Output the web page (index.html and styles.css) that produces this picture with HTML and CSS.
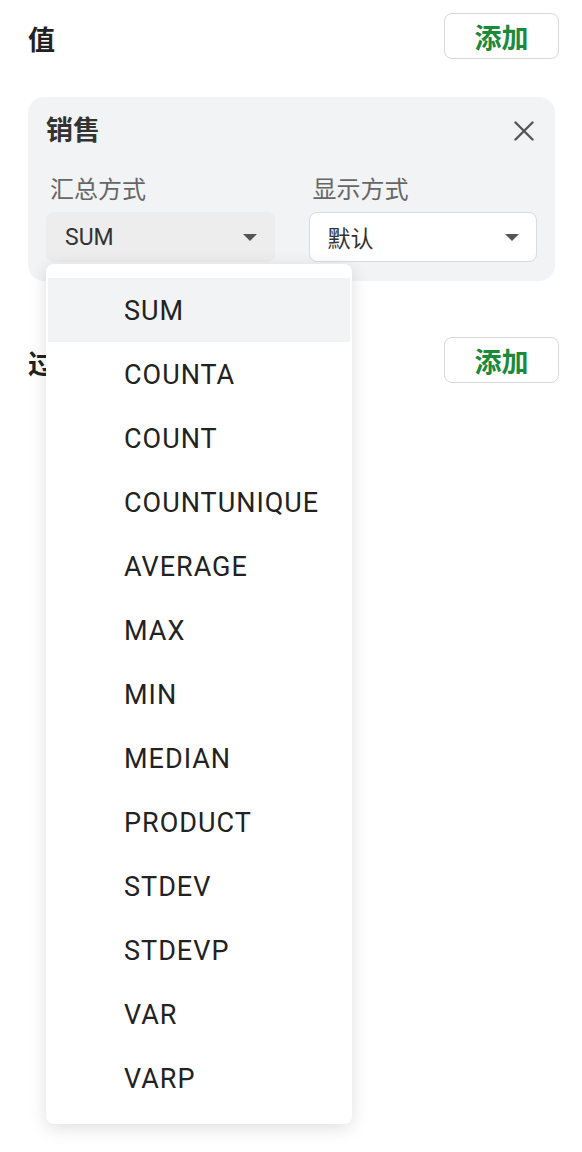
FILE: index.html
```html
<!DOCTYPE html>
<html lang="zh">
<head>
<meta charset="utf-8">
<link rel="stylesheet" href="styles.css">
</head>
<body>
<div class="page">
  <section class="section">
    <div class="section-head">
      <div class="section-title">值</div>
      <button class="add-btn">添加</button>
    </div>
    <div class="card">
      <div class="card-head">
        <div class="card-title">销售</div>
        <svg class="close" width="20" height="20" viewBox="0 0 20 20"><path d="M1.5 1.5 L18.5 18.5 M18.5 1.5 L1.5 18.5" stroke="#555" stroke-width="2.4" stroke-linecap="round" fill="none"/></svg>
      </div>
      <div class="fields">
        <div class="field">
          <div class="field-label">汇总方式</div>
          <div class="select-wrap">
            <div class="select select-active">
              <span class="select-value">SUM</span>
              <svg class="caret" width="14" height="7" viewBox="0 0 14 7"><polygon points="0,0 14,0 7,7" fill="#555"/></svg>
            </div>
            <ul class="menu">
              <li class="menu-item is-hover">SUM</li>
              <li class="menu-item">COUNTA</li>
              <li class="menu-item">COUNT</li>
              <li class="menu-item">COUNTUNIQUE</li>
              <li class="menu-item">AVERAGE</li>
              <li class="menu-item">MAX</li>
              <li class="menu-item">MIN</li>
              <li class="menu-item">MEDIAN</li>
              <li class="menu-item">PRODUCT</li>
              <li class="menu-item">STDEV</li>
              <li class="menu-item">STDEVP</li>
              <li class="menu-item">VAR</li>
              <li class="menu-item">VARP</li>
            </ul>
          </div>
        </div>
        <div class="field">
          <div class="field-label">显示方式</div>
          <div class="select select-outline">
            <span class="select-value">默认</span>
            <svg class="caret" width="14" height="7" viewBox="0 0 14 7"><polygon points="0,0 14,0 7,7" fill="#555"/></svg>
          </div>
        </div>
      </div>
    </div>
  </section>
  <section class="section section-filter">
    <div class="section-head">
      <div class="section-title">过滤</div>
      <button class="add-btn">添加</button>
    </div>
  </section>
</div>
</body>
</html>
```

FILE: styles.css
```css
* { box-sizing: border-box; }
html, body {
  margin: 0;
  padding: 0;
  background: #ffffff;
}
body {
  font-family: Roboto, "Noto Sans CJK SC", sans-serif;
  color: #222222;
}
.page {
  padding: 13px 23px 0 28px;
  min-height: 1152px;
}
.section-head {
  display: flex;
  justify-content: space-between;
  align-items: flex-start;
  height: 46px;
}
.section-title {
  font-size: 27px;
  font-weight: 600;
  line-height: 36px;
  padding-top: 10px;
  color: #222;
}
.add-btn {
  width: 115px;
  height: 46px;
  border: 1.5px solid #d6d8dc;
  border-radius: 8px;
  background: #fff;
  color: #1b8a3a;
  font-family: "Noto Sans CJK SC", sans-serif;
  font-size: 27px;
  font-weight: 600;
  line-height: 1;
  padding: 0;
  margin: 0;
}
.card {
  margin-top: 38px;
  margin-right: 4px;
  background: #f2f3f5;
  border-radius: 16px;
  padding: 18px 18px 19px 18px;
}
.card-head {
  display: flex;
  justify-content: space-between;
  align-items: center;
  height: 32px;
}
.card-title {
  font-size: 27px;
  font-weight: 600;
  line-height: 32px;
  color: #333;
}
.close {
  margin-right: 3px;
  display: block;
}
.fields {
  margin-top: 27px;
  display: grid;
  grid-template-columns: 1fr 1fr;
  column-gap: 34px;
}
.field-label {
  font-size: 24px;
  line-height: 32px;
  color: #666;
  padding-left: 4px;
  margin-bottom: 6px;
}
.select-wrap {
  position: relative;
}
.select {
  height: 50px;
  border-radius: 8px;
  display: flex;
  align-items: center;
  justify-content: space-between;
  padding: 0 17px 0 18px;
}
.select-value {
  font-size: 23px;
  color: #333;
}
.caret { display: block; }
.select-active {
  background: #ededee;
  border: 1px solid #ececed;
}
.select-outline {
  background: #ffffff;
  border: 1.5px solid #d9dbdf;
}
.menu {
  position: absolute;
  top: calc(100% + 2px);
  left: 0;
  width: 306px;
  margin: 0;
  padding: 14px 2px;
  list-style: none;
  background: #fff;
  border-radius: 8px;
  box-shadow: 0 4px 18px rgba(0, 0, 0, 0.13);
  z-index: 10;
}
.menu-item {
  height: 64px;
  display: flex;
  align-items: center;
  padding-left: 76px;
  padding-top: 2px;
  font-size: 27px;
  color: #222;
  letter-spacing: 1px;
}
.menu-item.is-hover {
  background: #f2f3f5;
}
.section-filter {
  margin-top: 56px;
}
```
